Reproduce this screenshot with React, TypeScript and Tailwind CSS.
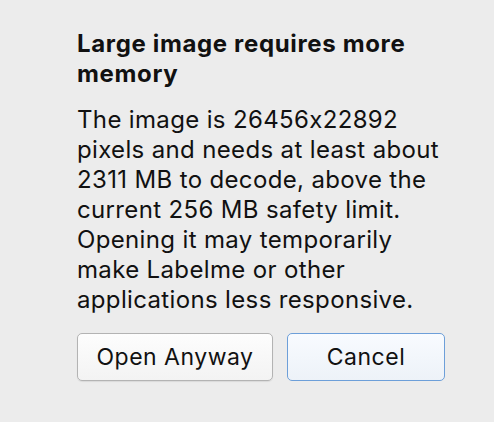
export default function App() {
  return (
    <div className="min-h-[422px] w-[494px] bg-[#ececec] font-['Inter','Liberation_Sans',sans-serif] text-[#111]">
      <div className="pl-[77px] pt-[29px]">
        <h1 className="whitespace-nowrap text-[24px] font-bold leading-[30px] tracking-[0.65px]">
          Large image requires more
          <br />
          memory
        </h1>
        <p className="mt-[16px] whitespace-nowrap text-[24px] leading-[30px] tracking-[0.35px]">
          The image is 26456x22892
          <br />
          pixels and needs at least about
          <br />
          2311 MB to decode, above the
          <br />
          current 256 MB safety limit.
          <br />
          Opening it may temporarily
          <br />
          make Labelme or other
          <br />
          applications less responsive.
        </p>
        <div className="mt-[18px] flex gap-[14px]">
          <button
            type="button"
            className="h-[48px] w-[196px] rounded-[5px] border border-[#b3b3b3] bg-gradient-to-b from-[#fdfdfd] to-[#f3f3f3] text-[23px] tracking-[0.5px] shadow-[0_1px_1px_rgba(0,0,0,0.08)]"
          >
            Open Anyway
          </button>
          <button
            type="button"
            className="h-[48px] w-[158px] rounded-[5px] border border-[#6d9fd9] bg-gradient-to-b from-[#f8fbff] to-[#edf2f8] text-[23px] tracking-[0.5px]"
          >
            Cancel
          </button>
        </div>
      </div>
    </div>
  );
}
